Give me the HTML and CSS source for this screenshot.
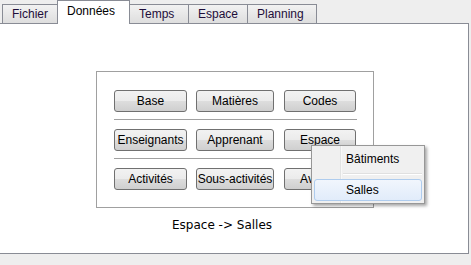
FILE: index.html
```html
<!DOCTYPE html>
<html>
<head>
    <title>Données</title>
    <link rel="stylesheet" href="styles.css">
</head>
<body>
    <div class="tabs">
        <div class="tab">Fichier</div>
        <div class="tab active">Données</div>
        <div class="tab">Temps</div>
        <div class="tab">Espace</div>
        <div class="tab">Planning</div>
    </div>
    <div class="pane">
        <div class="group">
            <div class="row">
                <button class="btn">Base</button>
                <button class="btn">Matières</button>
                <button class="btn">Codes</button>
            </div>
            <div class="sep"></div>
            <div class="row">
                <button class="btn">Enseignants</button>
                <button class="btn">Apprenant</button>
                <button class="btn">Espace</button>
            </div>
            <div class="sep"></div>
            <div class="row">
                <button class="btn">Activités</button>
                <button class="btn">Sous-activités</button>
                <button class="btn">Avancé</button>
            </div>
        </div>
        <div class="status">Espace -&gt; Salles</div>
    </div>
    <!-- popup menu opened from the Espace button -->
    <div class="menu">
        <div class="item">Bâtiments</div>
        <div class="menu-sep"></div>
        <div class="item hover">Salles</div>
    </div>
</body>
</html>
```

FILE: styles.css
```css
body {
    margin: 0;
    background-color: #eeeeee;
    font-family: "Liberation Sans", Arial, sans-serif;
    font-size: 12px;
    color: #000;
}
.tabs {
    display: flex;
    height: 23px;
    padding-left: 2px;
    align-items: flex-end;
}
.tab {
    height: 18px;
    padding: 0 9px;
    line-height: 18px;
    border: 1px solid #898c95;
    border-bottom: none;
    border-left: none;
    background: linear-gradient(#f2f2f2, #dedede);
    color: #1e0e3a;
}
.tab:first-child {
    border-left: 1px solid #898c95;
    width: 36px;
}
.tab:nth-child(3) {
    width: 40px;
}
.tab:nth-child(4) {
    width: 40px;
}
.tab:nth-child(5) {
    width: 50px;
}
.tab.active {
    height: 23px;
    line-height: 20px;
    width: 53px;
    background: #ffffff;
    border-left: 1px solid #898c95;
    margin-left: -1px;
    margin-bottom: -1px;
    position: relative;
    z-index: 1;
    color: #000;
}
.pane {
    height: 231px;
    background: #ffffff;
    border: 1px solid #898c95;
    border-left: none;
    width: 469px;
    box-sizing: border-box;
    padding-top: 47px;
}
.group {
    margin-left: 96px;
    width: 278px;
    height: 137px;
    box-sizing: border-box;
    border: 1px solid #a0a0a0;
    padding: 18px 16px 0 17px;
}
.row {
    display: flex;
    gap: 9px;
}
.btn {
    width: 73px;
    height: 22px;
    padding: 0;
    white-space: nowrap;
    font-family: inherit;
    font-size: 12px;
    color: #000;
    border: 1px solid #707070;
    border-radius: 3px;
    background: linear-gradient(#f2f2f2 0%, #ebebeb 50%, #dddddd 51%, #cfcfcf 100%);
}
.row .btn:nth-child(2) {
    width: 78px;
}
.row .btn:nth-child(3) {
    margin-left: 1px;
    width: 72px;
}
.sep {
    height: 1px;
    background: #a0a0a0;
    margin: 7px 0 9px 0;
}
.status {
    margin-left: 172px;
    margin-top: 10px;
    font-family: "DejaVu Sans", sans-serif;
    font-size: 12px;
}
.menu {
    position: absolute;
    left: 311px;
    top: 145px;
    width: 108px;
    padding: 2px;
    background: #f0f0f0 linear-gradient(to right, #f0f0f0 28px, #e2e3e3 28px, #e2e3e3 29px, #ffffff 29px, #f0f0f0 30px);
    border: 1px solid #979797;
    box-shadow: 2px 2px 3px rgba(0, 0, 0, 0.35);
}
.item {
    height: 20px;
    line-height: 20px;
    padding-left: 31px;
    border: 1px solid transparent;
    border-radius: 3px;
}
.item.hover {
    border-color: #aeccee;
    background: linear-gradient(#f1f6fd, #e1ecfa);
}
.menu-sep {
    height: 1px;
    margin: 3px 0 4px 29px;
    background: #e0e0e0;
    border-bottom: 1px solid #ffffff;
}
```
